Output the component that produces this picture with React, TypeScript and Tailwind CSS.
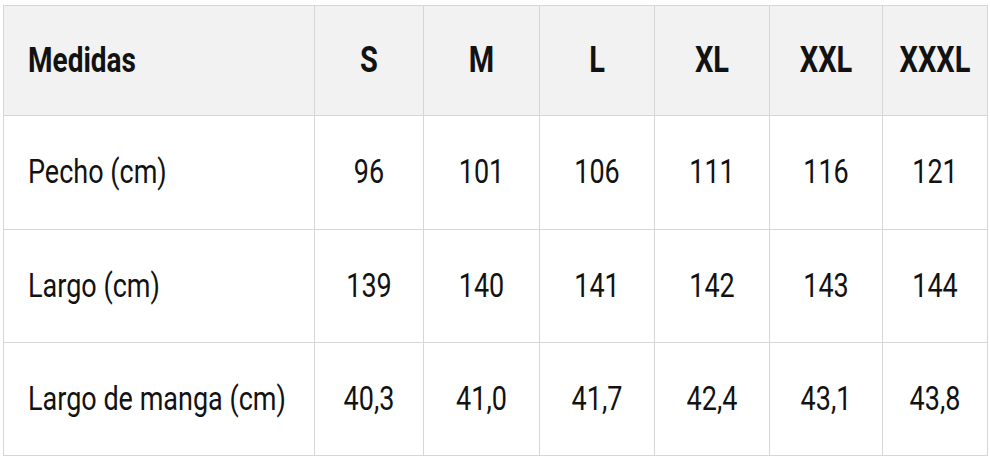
import React from "react";

const cols = ["w-[311px]", "w-[109px]", "w-[116px]", "w-[115px]", "w-[115px]", "w-[113px]", "w-[105px]"];
const heads = ["Medidas", "S", "M", "L", "XL", "XXL", "XXXL"];
const rows: { h: string; cells: string[] }[] = [
  { h: "h-[114px]", cells: ["Pecho (cm)", "96", "101", "106", "111", "116", "121"] },
  { h: "h-[113px]", cells: ["Largo (cm)", "139", "140", "141", "142", "143", "144"] },
  { h: "h-[113px]", cells: ["Largo de manga (cm)", "40,3", "41,0", "41,7", "42,4", "43,1", "43,8"] },
];

export default function App() {
  return (
    <div className="w-[990px] h-[460px] bg-white pt-[5px] pl-[3px] font-['Roboto',sans-serif] text-[#121212]">
      <div className="inline-flex flex-col border-l border-t border-[#d6d6d6]">
        <div className="flex h-[110px] bg-[#f2f2f2]">
          {heads.map((t, i) => (
            <div
              key={t}
              className={`${cols[i]} flex items-center border-r border-b border-[#d6d6d6] ${
                i === 0 ? "justify-start pl-[24px] text-[28px]" : "justify-center text-[29px]"
              } font-bold`}
            >
              <span className="inline-block scale-y-[1.26] leading-none">{t}</span>
            </div>
          ))}
        </div>
        {rows.map((r) => (
          <div key={r.cells[0]} className={`flex ${r.h}`}>
            {r.cells.map((t, i) => (
              <div
                key={i}
                className={`${cols[i]} flex items-center border-r border-b border-[#d6d6d6] text-[27px] ${
                  i === 0 ? "justify-start pl-[24px]" : "justify-center"
                }`}
              >
                <span className="inline-block scale-y-[1.2] leading-none">{t}</span>
              </div>
            ))}
          </div>
        ))}
      </div>
    </div>
  );
}
